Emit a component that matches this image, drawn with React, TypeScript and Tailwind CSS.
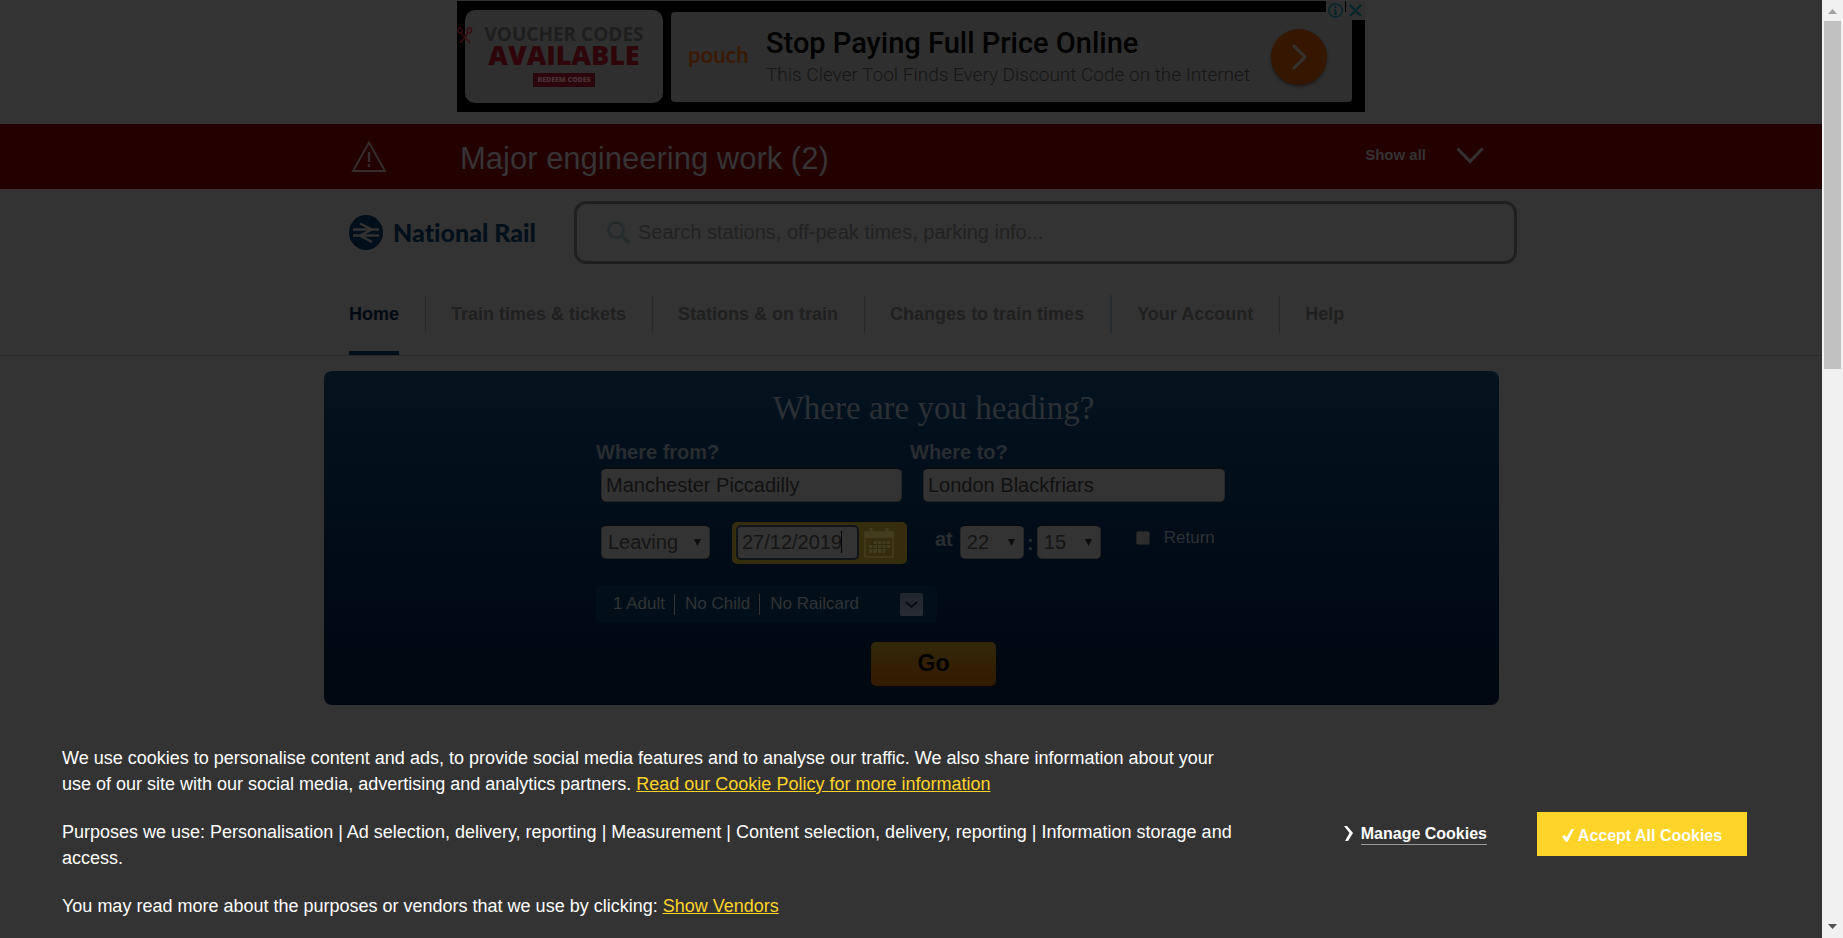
import type { ReactNode } from "react";

function AdBanner() {
  return (
    <div className="flex h-[124px] justify-center pt-px">
      <div className="relative flex h-[111px] w-[908px] gap-2 bg-black pt-[9px] pr-[13px] pl-2">
        <div className="flex h-[93px] w-[198px] shrink-0 flex-col items-center rounded-[10px] bg-[#2f2f2f] pt-3 font-['Open_Sans']">
          <div className="text-[19px] leading-[24px] font-bold whitespace-nowrap text-[#1e1e1e]">VOUCHER CODES</div>
          <div className="text-[27px] leading-[18px] font-extrabold text-[#2e060a]">AVAILABLE</div>
          <div className="mt-[9px] flex h-[14px] w-[62px] items-center justify-center bg-[#2c060a] text-[7px] font-extrabold whitespace-nowrap text-[#4a3335]">
            REDEEM CODES
          </div>
        </div>
        <svg className="absolute top-[26px] left-0" width="16" height="17" viewBox="0 0 16 17" fill="none" stroke="#3a0c10" strokeWidth="1.3">
          <ellipse cx="3" cy="3.5" rx="2" ry="2.8" transform="rotate(-20 3 3.5)" />
          <ellipse cx="12.5" cy="3.5" rx="2" ry="2.8" transform="rotate(20 12.5 3.5)" />
          <path d="M4 6 13 16M11.5 6 3 16" />
        </svg>
        <div className="mt-[2px] flex h-[90px] min-w-0 flex-1 items-center rounded-[4px] bg-[#2f2f2f] pr-[25px] pl-[17px]">
          <div className="w-[78px] shrink-0 pb-1 font-['Lato'] text-[22px] leading-7 font-bold text-[#3a1a05]">pouch</div>
          <div className="min-w-0 flex-1 pt-[3px] font-['Roboto'] whitespace-nowrap">
            <div className="text-[29px] leading-8 font-medium text-black">Stop Paying Full Price Online</div>
            <div className="text-[19px] leading-8 font-light text-[#161616]">This Clever Tool Finds Every Discount Code on the Internet</div>
          </div>
          <button aria-label="Open advert" className="flex size-14 shrink-0 items-center justify-center rounded-full bg-[#351700] shadow-[0_2px_3px_#1c1c1c]">
            <svg width="16" height="26" viewBox="0 0 16 26" fill="none" stroke="#363230" strokeWidth="3" strokeLinecap="round" strokeLinejoin="round">
              <path d="M3 2 14 13 3 24" />
            </svg>
          </button>
        </div>
        <div className="absolute top-0 right-0 flex h-[19px] w-[39px] items-center justify-between bg-[#303030] px-[2px]">
          <svg width="15" height="15" viewBox="0 0 15 15" fill="none" stroke="#00252b" strokeWidth="1.3">
            <circle cx="7.5" cy="7.5" r="6.7" />
            <path strokeWidth="2" d="M7.5 6.5v5M7.5 3v2" />
            <path strokeWidth="1" d="M5.8 6.5h2M5.5 11.5h4" />
          </svg>
          <span className="h-[11px] w-px self-start bg-black" />
          <svg width="15" height="15" viewBox="0 0 15 15" stroke="#00252b" strokeWidth="1.8">
            <path d="M2 2l11 11M13 2 2 13" />
          </svg>
        </div>
      </div>
    </div>
  );
}

function AlertBar() {
  return (
    <div className="h-[65px] bg-[#220100]">
      <div className="mx-auto flex h-full w-full max-w-[1212px] items-center pl-[46px]">
        <svg width="36" height="33" viewBox="0 0 36 33" fill="none" stroke="#352c2b" strokeWidth="2">
          <path d="M18 2.5 34 31H2Z" />
          <path d="M18 12v10M18 24v3" strokeWidth="2.5" />
        </svg>
        <h2 className="ml-[73px] pt-[5px] text-[31px] leading-10 whitespace-nowrap text-[#363434]">Major engineering work (2)</h2>
        <button className="mr-[33px] ml-auto flex items-center gap-[30px] pb-[2px] text-[15px] font-bold text-[#363232]">
          Show all
          <svg width="28" height="17" viewBox="0 0 28 17" fill="none" stroke="#363232" strokeWidth="3">
            <path d="M1.5 1.5 14 14.5 26.5 1.5" />
          </svg>
        </button>
      </div>
    </div>
  );
}

const navItems = ["Home", "Train times & tickets", "Stations & on train", "Changes to train times", "Your Account", "Help"];

function Header() {
  return (
    <header className="border-b border-[#292929]">
      <div className="mx-auto w-full max-w-[1212px] pl-11">
        <div className="flex h-[75px] items-end justify-between">
          <a href="#home" className="flex items-center gap-[10px] pb-[14px] text-[#010f1b]">
            <svg width="34" height="35" viewBox="0 0 34 35">
              <ellipse cx="17" cy="17.5" rx="17" ry="17.5" fill="#010f1b" />
              <g fill="none" stroke="#333" strokeWidth="2.5">
                <path d="M4 14.5h26M4 20.500h26" />
                <path d="M11 8.500 23 14.500 11 20.500 23 27" />
              </g>
            </svg>
            <span className="pb-[2px] font-['Lato'] text-[25px] leading-8 font-black whitespace-nowrap [font-variant-ligatures:none]">National Rail</span>
          </a>
          <label className="flex h-[63px] w-[943px] items-center rounded-[12px] border-3 border-[#202020] pl-[30px]">
            <svg width="23" height="23" viewBox="0 0 23 23" fill="none" stroke="#262b2e" strokeWidth="2.600">
              <circle cx="9" cy="9" r="7.500" />
              <path d="m14.500 14.500 7 7" strokeWidth="3.500" />
            </svg>
            <input
              aria-label="Search"
              className="ml-2 min-w-0 flex-1 bg-transparent pb-[2px] text-[20px] outline-none placeholder:text-[#222]"
              placeholder="Search stations, off-peak times, parking info..."
            />
          </label>
        </div>
        <nav className="flex h-[91px] items-end text-[18px] font-bold">
          {navItems.map((item, i) => (
            <div key={item} className="flex items-end">
              {i > 0 && (
                <span
                  className={
                    i === 4
                      ? "mr-[25px] mb-[22px] ml-[26px] h-[38px] w-[2px] bg-[#262b30]"
                      : "mr-[25px] mb-[22px] ml-[26px] h-[38px] w-px bg-[#292929]"
                  }
                />
              )}
              <a
                href="#nav"
                className={
                  i === 0
                    ? "flex h-[54px] border-b-4 border-[#010f1b] whitespace-nowrap text-[#010914]"
                    : "flex h-[54px] whitespace-nowrap text-[#202020]"
                }
              >
                {item}
              </a>
            </div>
          ))}
        </nav>
      </div>
    </header>
  );
}

const fieldClass = "h-[34px] w-full rounded-[5px] border border-t-[#0a0a0a] border-[#252525] bg-[#333] px-1 text-[20px] text-[#111] outline-none";

function SelectBox({ label, value, className }: { label: string; value: string; className: string }) {
  return (
    <div className={className}>
      <select aria-label={label} defaultValue={value} className="block h-[34px] w-full appearance-none rounded-[5px] border border-t-[#0a0a0a] border-[#252525] bg-[#333] pl-[6px] text-[20px] text-[#151515]">
        <option>{value}</option>
      </select>
      <svg className="pointer-events-none absolute top-[14px] right-[9px]" width="7" height="7" viewBox="0 0 7 7" fill="#0c0c0c">
        <path d="M0 0h7L3.500 7Z" />
      </svg>
    </div>
  );
}

function CalendarIcon() {
  return (
    <svg width="31" height="32" viewBox="0 0 31 32">
      <path d="M1 5h28v25H1Z" fill="none" stroke="#433c1e" strokeWidth="1.500" />
      <path d="M1 5h28v6H1Z" fill="#433c1e" />
      <path d="M7 1v6M23 1v6" stroke="#433c1e" strokeWidth="3" />
      <path d="M9 14h17v7H9ZM5 18h21v4H5ZM5 21h17v5H5Z" fill="#433c1e" />
      <path d="M5 17.500h21M5 21.500h21M9 13v14M13.500 13v14M18 13v14M22 13v14" stroke="#2f2910" strokeWidth="1" />
    </svg>
  );
}

function JourneyPlanner() {
  return (
    <section className="mx-auto mt-[15px] h-[334px] w-full max-w-[1175px] rounded-lg bg-linear-to-b from-[#05131e] via-[#010c18] to-[#000710] pt-4">
      <form className="mx-auto w-[630px]" onSubmit={(e) => e.preventDefault()}>
        <h1 className="h-11 pl-[45px] text-center font-['Liberation_Serif',serif] text-[33px] leading-[42px] text-[#2b3034]">Where are you heading?</h1>
        <div className="flex text-[20px] font-bold text-[#282d31]">
          <div className="w-[314px]">
            <label htmlFor="from" className="block h-[37px] leading-[43px]">Where from?</label>
            <div className="ml-[5px] w-[301px] font-normal">
              <input id="from" className={fieldClass} defaultValue="Manchester Piccadilly" />
            </div>
          </div>
          <div className="flex-1">
            <label htmlFor="to" className="block h-[37px] leading-[43px]">Where to?</label>
            <div className="ml-[13px] w-[302px] font-normal">
              <input id="to" className={fieldClass} defaultValue="London Blackfriars" />
            </div>
          </div>
        </div>
        <div className="mt-5 flex h-[42px] items-center pl-[5px] whitespace-nowrap">
          <SelectBox label="Leaving or arriving" value="Leaving" className="relative w-[109px] pb-[2px]" />
          <div className="ml-[22px] flex h-[42px] w-[175px] items-center gap-[5px] rounded-[5px] bg-[#352d0d] pl-1">
            <div className="relative w-[123px] pb-px">
              <input aria-label="Date" className="block h-[35px] w-full rounded-[5px] border-2 border-[#111519] bg-[#333] px-[4px] text-[20px] text-[#151515] outline-none" defaultValue="27/12/2019" />
              <span className="absolute top-[6px] left-[105px] h-[22px] w-px bg-black" />
            </div>
            <button type="button" aria-label="Choose date">
              <CalendarIcon />
            </button>
          </div>
          <span className="mr-[7px] ml-[28px] pb-[8px] text-[20px] font-bold text-[#282d31]">at</span>
          <SelectBox label="Hour" value="22" className="relative w-[64px] pb-[2px]" />
          <span className="w-[13px] text-center text-[20px] font-bold text-[#282d31]">:</span>
          <SelectBox label="Minute" value="15" className="relative w-[64px] pb-[2px]" />
          <label className="ml-[35px] flex items-center gap-[14px] pb-[10px] text-[17px] text-[#2c3135]">
            <input type="checkbox" className="size-[14px] appearance-none rounded-[2px] border border-[#1c1f22] bg-[#2d2d2d]" />
            Return
          </label>
        </div>
        <div className="mt-[21px] flex h-[38px] w-[341px] items-center rounded-[5px] bg-[#020f19] pl-[17px] text-[17px] whitespace-nowrap text-[#303436]">
          <span className="pb-px">1 Adult</span>
          <span className="ml-[9px] h-[21px] w-px bg-[#333]" />
          <span className="ml-[10px] pb-px">No Child</span>
          <span className="ml-[9px] h-[21px] w-px bg-[#333]" />
          <span className="ml-[10px] pb-px">No Railcard</span>
          <button type="button" aria-label="Passenger options" className="mt-px mr-[14px] ml-auto flex size-[23px] items-center justify-center rounded-[2px] bg-linear-to-b from-[#20252b] to-[#282d33]">
            <svg width="13" height="8" viewBox="0 0 13 8" fill="none" stroke="#060c18" strokeWidth="2">
              <path d="m1 1 5.500 5L12 1" />
            </svg>
          </button>
        </div>
        <button type="submit" className="mt-[19px] ml-[275px] block h-11 w-[125px] rounded-[5px] bg-linear-to-b from-[#33280a] to-[#331900] pb-[2px] text-[23px] font-bold text-black">
          Go
        </button>
      </form>
    </section>
  );
}

function PolicyLink({ children }: { children: ReactNode }) {
  return (
    <a href="#policy" className="text-[#ffd428] underline">
      {children}
    </a>
  );
}

function CookieBar() {
  return (
    <section aria-label="Cookies" className="flex flex-1 items-start bg-[#333] pt-[40px] pr-[75px] pl-[62px] text-white">
      <div className="max-w-[1180px] flex-1 space-y-[22px] text-[18px] leading-[26px]">
        <p>
          We use cookies to personalise content and ads, to provide social media features and to analyse our traffic. We also share information about your use of our site with our social media, advertising and analytics partners. <PolicyLink>Read our Cookie Policy for more information</PolicyLink>
        </p>
        <p>Purposes we use: Personalisation | Ad selection, delivery, reporting | Measurement | Content selection, delivery, reporting | Information storage and access.</p>
        <p>
          You may read more about the purposes or vendors that we use by clicking: <PolicyLink>Show Vendors</PolicyLink>
        </p>
      </div>
      <div className="mt-[67px] ml-auto flex gap-[50px] text-[16px] font-bold whitespace-nowrap">
        <a href="#manage" className="flex items-start gap-2 pt-[12px]">
          <svg className="mt-[2px]" width="9" height="15" viewBox="0 0 9 15" fill="#fff">
            <path d="M0 0h3l6 7-5 8H1l4.500-8Z" />
          </svg>
          <span className="border-b border-[#999] leading-5">Manage Cookies</span>
        </a>
        <button className="flex h-11 w-[210px] items-center justify-center gap-1 bg-[#ffd428] pt-[3px]">
          <svg width="12" height="13" viewBox="0 0 12 13" fill="#fff">
            <path d="M0 7.500 2.500 6 4.500 8.500 9.500 0H12L5.500 13H4Z" />
          </svg>
          Accept All Cookies
        </button>
      </div>
    </section>
  );
}

function ScrollTrack() {
  return (
    <div aria-hidden="true" className="flex w-[21px] flex-col items-center bg-[#f1f1f1]">
      <svg className="h-[21px] w-[9px]" viewBox="0 0 9 21" fill="#a3a3a3">
        <path d="M0 14 4.500 9 9 14Z" />
      </svg>
      <div className="h-[348px] w-[17px] bg-[#c1c1c1]" />
      <svg className="mt-auto h-[22px] w-[9px]" viewBox="0 0 9 22" fill="#505050">
        <path d="M0 8 4.500 13 9 8Z" />
      </svg>
    </div>
  );
}

export default function App() {
  return (
    <div className="flex min-h-screen bg-[#333] font-['Liberation_Sans',Arial,sans-serif]">
      <main className="flex min-w-0 flex-1 flex-col">
        <AdBanner />
        <AlertBar />
        <Header />
        <JourneyPlanner />
        <CookieBar />
      </main>
      <ScrollTrack />
    </div>
  );
}
